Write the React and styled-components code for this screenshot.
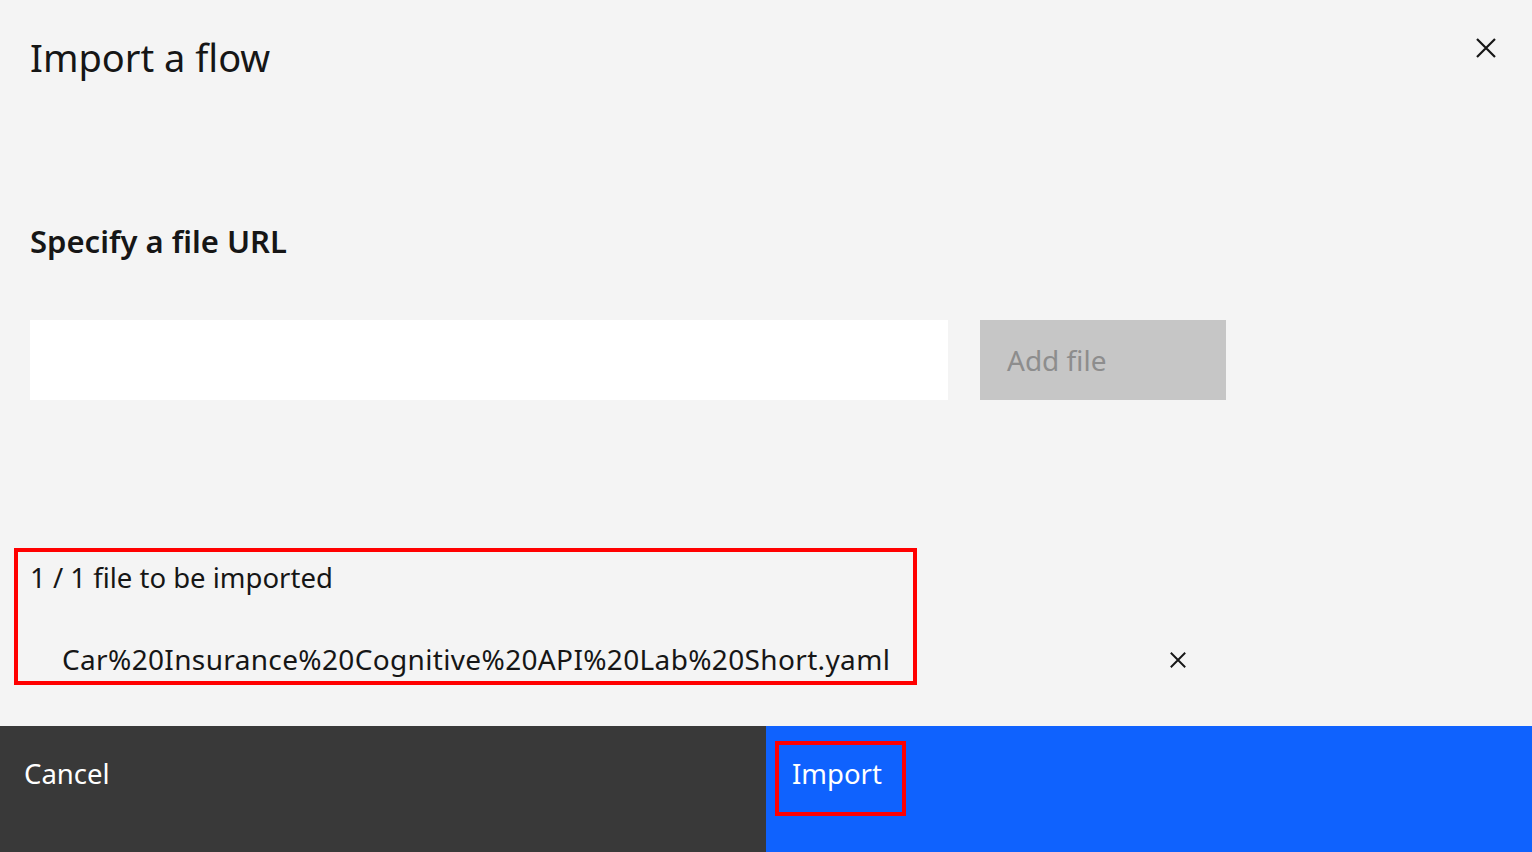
import React from 'react'
import { styled, createGlobalStyle } from 'styled-components'

const GlobalStyle = createGlobalStyle`
    html, body {
        margin: 0;
        padding: 0;
        background: #f4f4f4;
    }

    body {
        font-family: 'Noto Sans', 'Liberation Sans', sans-serif;
        color: #161616;
    }
`;

const Modal = styled.div`
    min-height: 100vh;
    display: flex;
    flex-direction: column;
    background: #f4f4f4;
`;

const Header = styled.header`
    display: flex;
    justify-content: space-between;
    align-items: flex-start;
    padding: 34px 36px 0 30px;
`;

const Title = styled.h2`
    margin: 0;
    font-size: 38px;
    line-height: 47px;
    font-weight: 400;
`;

const IconButton = styled.button`
    display: flex;
    align-items: center;
    justify-content: center;
    padding: 0;
    margin-top: ${({ $offset }) => $offset || 0}px;
    width: ${({ $size }) => $size}px;
    height: ${({ $size }) => $size}px;
    border: none;
    background: transparent;
    color: #161616;
    cursor: pointer;
`;

const Body = styled.main`
    flex: 1;
    display: flex;
    flex-direction: column;
    padding: 0 30px;
`;

const Heading = styled.h3`
    margin: 141px 0 0;
    font-size: 31px;
    line-height: 39px;
    font-weight: 600;
`;

const InputRow = styled.div`
    display: flex;
    gap: 32px;
    margin-top: 59px;
`;

const UrlInput = styled.input`
    width: 918px;
    height: 80px;
    box-sizing: border-box;
    border: none;
    background: #ffffff;
    outline: none;
    padding: 0 24px;
    font: inherit;
    font-size: 28px;
`;

const DisabledButton = styled.button`
    width: 246px;
    height: 80px;
    border: none;
    background: #c6c6c6;
    color: #8d8d8d;
    text-align: left;
    padding: 0 27px;
    font-family: inherit;
    font-size: 28px;
`;

const FileSection = styled.section`
    position: relative;
    margin-top: 148px;
    padding: 12px 0 8px;
    display: flex;
    flex-direction: column;
    gap: 45px;
`;

const Label = styled.div`
    font-size: 27.5px;
    line-height: 36px;
`;

const FileRow = styled.div`
    width: 1156px;
    display: flex;
    justify-content: space-between;
    align-items: center;
    padding-left: 32px;
    box-sizing: border-box;
    font-size: 28px;
    line-height: 36px;
`;

const FileName = styled.span`
    letter-spacing: 0.35px;
`;

const Highlight = styled.div`
    position: absolute;
    top: ${({ $top }) => $top}px;
    left: ${({ $left }) => $left}px;
    width: ${({ $width }) => $width}px;
    height: ${({ $height }) => $height}px;
    box-sizing: border-box;
    border: 4px solid #ff0000;
    pointer-events: none;
`;

const Footer = styled.footer`
    display: grid;
    grid-template-columns: 1fr 1fr;
    height: 126px;
`;

const FooterButton = styled.button`
    position: relative;
    border: none;
    margin: 0;
    text-align: left;
    display: flex;
    align-items: flex-start;
    padding: 30px ${({ $primary }) => ($primary ? '26px' : '24px')};
    background: ${({ $primary }) => ($primary ? '#0f62fe' : '#393939')};
    color: #ffffff;
    font-family: inherit;
    font-size: 27.5px;
    line-height: 36px;
`;

const CloseIcon = ({ size, stroke }) => (
    <svg width={size} height={size} viewBox="0 0 20 20" fill="none">
        <path d="M1 1 L19 19 M19 1 L1 19" stroke="currentColor" strokeWidth={stroke} />
    </svg>
);

const App = () => {
    return (
        <Modal>
            <GlobalStyle />
            <Header>
                <Title>Import a flow</Title>
                <IconButton $size={20} $offset={4} aria-label="Close">
                    <CloseIcon size={20} stroke={2.2} />
                </IconButton>
            </Header>
            <Body>
                <Heading>Specify a file URL</Heading>
                <InputRow>
                    <UrlInput type="text" />
                    <DisabledButton disabled>Add file</DisabledButton>
                </InputRow>
                <FileSection>
                    <Label>1 / 1 file to be imported</Label>
                    <FileRow>
                        <FileName>Car%20Insurance%20Cognitive%20API%20Lab%20Short.yaml</FileName>
                        <IconButton $size={16} $offset={2} aria-label="Remove file">
                            <CloseIcon size={16} stroke={2.4} />
                        </IconButton>
                    </FileRow>
                    <Highlight $top={0} $left={-16} $width={903} $height={137} />
                </FileSection>
            </Body>
            <Footer>
                <FooterButton>Cancel</FooterButton>
                <FooterButton $primary>
                    Import
                    <Highlight $top={15} $left={9} $width={131} $height={75} />
                </FooterButton>
            </Footer>
        </Modal>
    )
}

export default App
